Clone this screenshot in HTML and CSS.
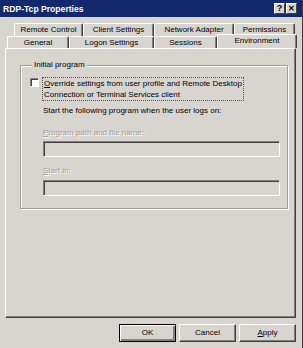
FILE: index.html
```html
<!DOCTYPE html>
<html lang="en">
<head>
	<meta charset="UTF-8">
	<title>RDP-Tcp Properties</title>
	<link rel="stylesheet" href="styles.css">
</head>
<body>
	<div class="window">
		<div class="titlebar">
			<span class="title">RDP-Tcp Properties</span>
			<div class="ctrls">
				<span class="cbtn">?</span>
				<span class="cbtn close">&#x2715;</span>
			</div>
		</div>
		<div class="tabs">
			<div class="tabrow back">
				<div class="tab w69">Remote Control</div>
				<div class="tab w71">Client Settings</div>
				<div class="tab w80">Network Adapter</div>
				<div class="tab w61">Permissions</div>
			</div>
			<div class="tabrow front">
				<div class="tab w62">General</div>
				<div class="tab w85">Logon Settings</div>
				<div class="tab w63">Sessions</div>
				<div class="tab w80 active">Environment</div>
			</div>
		</div>
		<div class="panel">
			<fieldset class="group">
				<legend>Initial program</legend>
				<div class="check">
					<span class="box"></span>
					<span class="focus"><u>O</u>verride settings from user profile and Remote Desktop<br>Connection or Terminal Services client</span>
				</div>
				<p class="line start">Start the following program when the user logs on:</p>
				<p class="line dis lbl1"><u>P</u>rogram path and file name:</p>
				<div class="field f1"></div>
				<p class="line dis lbl2"><u>S</u>tart in:</p>
				<div class="field f2"></div>
			</fieldset>
		</div>
		<div class="buttons">
			<div class="btn default">OK</div>
			<div class="btn">Cancel</div>
			<div class="btn"><u>A</u>pply</div>
		</div>
	</div>
</body>
</html>
```
FILE: styles.css
```css
html,body{margin:0;padding:0;}
body{background:#d8d5d0;font-family:"Liberation Sans",Arial,sans-serif;font-size:8px;color:#000;}
.window{width:303px;height:348px;box-sizing:border-box;background:#d8d5d0;border-right:1px solid #404040;overflow:hidden;}

.titlebar{height:17px;background:#13296b;display:flex;align-items:center;justify-content:space-between;padding:0 5px 0 3px;}
.title{color:#fff;font-weight:bold;font-size:8.6px;}
.ctrls{display:flex;}
.cbtn{width:11px;height:11px;box-sizing:border-box;background:#d8d5d0;border:1px solid;border-color:#fff #404040 #404040 #fff;font-weight:bold;font-size:9px;line-height:9px;text-align:center;color:#000;}
.cbtn.close{margin-left:1px;font-size:8px;}

.tabs{padding-top:6px;}
.tabrow{display:flex;}
.tabrow.back{padding-left:14px;height:13px;}
.tabrow.front{padding-left:7px;height:12px;}
.tab{box-sizing:border-box;height:100%;border-left:1px solid #fff;border-top:1px solid #fff;border-right:1px solid #404040;box-shadow:inset -1px 0 #808080;text-align:center;line-height:12px;white-space:nowrap;border-radius:2px 2px 0 0;}
.tab.active{height:14px;margin-top:-2px;margin-bottom:-1px;position:relative;z-index:1;background:#d8d5d0;line-height:11px;}
.w61{width:61px;}
.w62{width:62px;}
.w63{width:63px;}
.w69{width:69px;}
.w71{width:71px;}
.w80{width:80px;}
.w85{width:85px;}

.panel{margin:0 6px 0 5px;height:270px;box-sizing:border-box;border:1px solid;border-color:#fff #404040 #404040 #fff;box-shadow:inset -1px -1px #808080;padding:11px 7px 0 14px;}

.group{margin:0;border:1px solid #a19e98;box-shadow:inset 1px 1px #fff,1px 1px #fff;padding:7px 6px 11px 9px;height:149px;box-sizing:border-box;}
.group legend{padding:0 2px;margin-left:2px;line-height:10px;background:#d8d5d0;}

.check{display:flex;align-items:flex-start;}
.box{width:9px;height:9px;box-sizing:border-box;background:#fff;border:1px solid;border-color:#808080 #fff #fff #808080;box-shadow:inset 1px 1px #404040;margin-top:1px;}
.focus{margin-left:3px;border:1px dotted #555;line-height:11px;padding:0 1px;}

.line{margin:0 0 0 13px;line-height:11px;}
.start{margin-top:4px;}
.dis{color:#a09d98;text-shadow:1px 1px #fff;}
.lbl1{margin-top:11px;}
.lbl2{margin-top:8px;}
.field{margin-left:13px;width:237px;height:16px;box-sizing:border-box;border:1px solid;border-color:#808080 #fff #fff #808080;box-shadow:inset 1px 1px #404040;}
.f1{margin-top:3px;}
.f2{margin-top:4px;}

.buttons{display:flex;justify-content:flex-end;gap:3px;padding:6px 6px 0 0;}
.btn{width:57px;height:18px;box-sizing:border-box;border:1px solid;border-color:#fff #404040 #404040 #fff;box-shadow:inset -1px -1px #808080;text-align:center;line-height:16px;}
.btn.default{border-color:#000;box-shadow:inset 1px 1px #fff,inset -2px -2px #808080;}
```
